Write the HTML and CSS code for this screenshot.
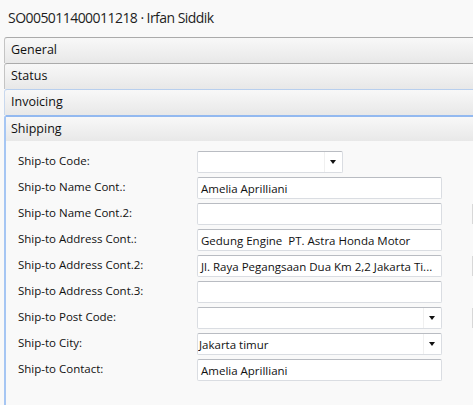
FILE: index.html
```html
<!DOCTYPE html>
<html>
<head>
<meta charset="utf-8">
<link rel="stylesheet" href="styles.css">
</head>
<body>
<div class="title">SO005011400011218 · Irfan Siddik</div>
<div class="accordion">
  <div class="hdr">General</div>
  <div class="hdr">Status</div>
  <div class="hdr pre-active">Invoicing</div>
  <div class="section">
    <div class="hdr active">Shipping</div>
    <div class="form">
      <div class="lbl">Ship-to Code:</div>
      <div class="field select short"><span class="val"></span><span class="arrow"></span></div>
      <div class="side"></div>

      <div class="lbl">Ship-to Name Cont.:</div>
      <div class="field"><span class="val">Amelia Aprilliani</span></div>
      <div class="side"></div>

      <div class="lbl">Ship-to Name Cont.2:</div>
      <div class="field"><span class="val"></span></div>
      <div class="side"><span class="stub"></span></div>

      <div class="lbl">Ship-to Address Cont.:</div>
      <div class="field"><span class="val">Gedung Engine&nbsp; PT. Astra Honda Motor</span></div>
      <div class="side"></div>

      <div class="lbl">Ship-to Address Cont.2:</div>
      <div class="field"><span class="val">Jl. Raya Pegangsaan Dua Km 2,2 Jakarta Ti...</span></div>
      <div class="side"><span class="stub"></span></div>

      <div class="lbl">Ship-to Address Cont.3:</div>
      <div class="field"><span class="val"></span></div>
      <div class="side"></div>

      <div class="lbl">Ship-to Post Code:</div>
      <div class="field select"><span class="val"></span><span class="arrow"></span></div>
      <div class="side"><span class="stub"></span></div>

      <div class="lbl">Ship-to City:</div>
      <div class="field select"><span class="val tight">Jakarta timur</span><span class="arrow"></span></div>
      <div class="side"></div>

      <div class="lbl">Ship-to Contact:</div>
      <div class="field"><span class="val">Amelia Aprilliani</span></div>
      <div class="side"></div>
    </div>
  </div>
</div>
</body>
</html>
```

FILE: styles.css
```css
html, body {
  margin: 0;
  padding: 0;
  background: #f9f9f9;
  overflow: hidden;
  height: 405px;
}
body {
  font-family: "Open Sans", "Noto Sans", sans-serif;
  color: #1a1a1a;
}
.title {
  height: 37px;
  padding-left: 8px;
  font-size: 14px;
  letter-spacing: -0.55px;
  line-height: 35px;
  color: #1e1e1e;
}
.accordion {
  margin-left: 4px;
  width: 500px;
}
.hdr {
  box-sizing: border-box;
  height: 26px;
  border-top: 1px solid #ababab;
  border-left: 1px solid #c4c4c4;
  border-top-left-radius: 3px;
  background: linear-gradient(#f8f8f8, #e8e8e8);
  font-size: 12.5px;
  line-height: 24px;
  padding-left: 6px;
  color: #111;
}
.hdr.pre-active {
  border-top-color: #b8cfee;
  border-left-color: #c8d8ee;
}
.hdr.active {
  border-top: 2px solid #93b9f0;
  border-left: 2px solid #a6c6f3;
  padding-left: 5px;
  line-height: 23px;
}
.section {
  border-left: 2px solid #a6c6f3;
  border-top-left-radius: 3px;
  height: 400px;
}
.section .hdr.active {
  border-left: none;
  border-top-left-radius: 0;
}
.form {
  display: grid;
  grid-template-columns: 179px 245px 30px 20px;
  grid-auto-rows: 22px;
  row-gap: 4px;
  padding: 10px 0 0 12px;
}
.lbl {
  font-size: 11.5px;
  line-height: 20px;
  color: #111;
  white-space: nowrap;
}
.field {
  box-sizing: border-box;
  display: flex;
  align-items: center;
  border: 1px solid #dadde2;
  border-top-color: #b9bcc2;
  border-radius: 2px;
  background: #ffffff;
  height: 22px;
}
.field.short {
  width: 146px;
}
.val {
  flex: 1;
  font-size: 11.5px;
  padding-left: 3px;
  white-space: nowrap;
  overflow: hidden;
  color: #111;
}
.val.tight {
  padding-left: 1px;
}
.arrow {
  width: 17px;
  height: 20px;
  border-left: 1px solid #f0f0f0;
  position: relative;
}
.arrow::after {
  content: "";
  position: absolute;
  left: 5px;
  top: 8px;
  border-left: 3.5px solid transparent;
  border-right: 3.5px solid transparent;
  border-top: 4px solid #111;
}
.side {
  grid-column: 4;
}
.stub {
  display: block;
  margin-top: 1px;
  height: 20px;
  border-left: 1px solid #d8d8d8;
}
```
